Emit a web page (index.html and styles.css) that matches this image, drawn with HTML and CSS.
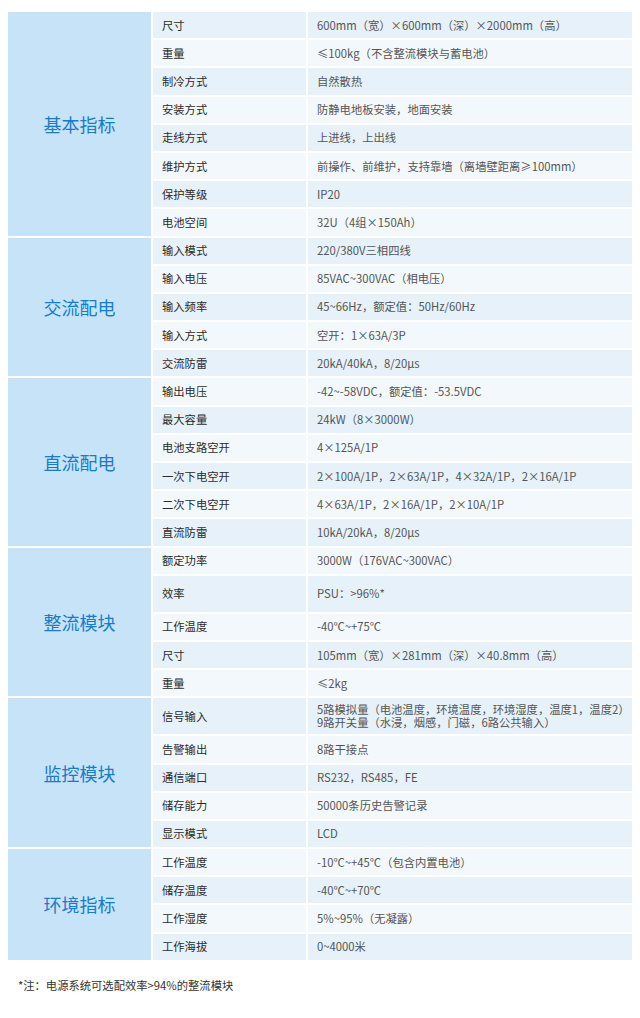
FILE: index.html
```html
<!DOCTYPE html>
<html lang="zh-CN">
<head>
<meta charset="utf-8">
<title>技术参数</title>
<link rel="stylesheet" href="styles.css">
</head>
<body>
<table class="spec">
  <colgroup>
    <col class="c-cat">
    <col class="c-lbl">
    <col class="c-val">
  </colgroup>
  <tbody>
    <tr><td class="cat" rowspan="8">基本指标</td><td class="lbl">尺寸</td><td class="val">600mm（宽）×600mm（深）×2000mm（高）</td></tr>
    <tr><td class="lbl">重量</td><td class="val">≤100kg（不含整流模块与蓄电池）</td></tr>
    <tr><td class="lbl">制冷方式</td><td class="val">自然散热</td></tr>
    <tr><td class="lbl">安装方式</td><td class="val">防静电地板安装，地面安装</td></tr>
    <tr><td class="lbl">走线方式</td><td class="val">上进线，上出线</td></tr>
    <tr><td class="lbl">维护方式</td><td class="val">前操作、前维护，支持靠墙（离墙壁距离≥100mm）</td></tr>
    <tr><td class="lbl">保护等级</td><td class="val">IP20</td></tr>
    <tr><td class="lbl">电池空间</td><td class="val">32U（4组×150Ah）</td></tr>

    <tr><td class="cat" rowspan="5">交流配电</td><td class="lbl">输入模式</td><td class="val">220/380V三相四线</td></tr>
    <tr><td class="lbl">输入电压</td><td class="val">85VAC~300VAC（相电压）</td></tr>
    <tr><td class="lbl">输入频率</td><td class="val">45~66Hz，额定值：50Hz/60Hz</td></tr>
    <tr><td class="lbl">输入方式</td><td class="val">空开：1×63A/3P</td></tr>
    <tr><td class="lbl">交流防雷</td><td class="val">20kA/40kA，8/20μs</td></tr>

    <tr><td class="cat" rowspan="6">直流配电</td><td class="lbl">输出电压</td><td class="val">-42~-58VDC，额定值：-53.5VDC</td></tr>
    <tr><td class="lbl">最大容量</td><td class="val">24kW（8×3000W）</td></tr>
    <tr><td class="lbl">电池支路空开</td><td class="val">4×125A/1P</td></tr>
    <tr><td class="lbl">一次下电空开</td><td class="val">2×100A/1P，2×63A/1P，4×32A/1P，2×16A/1P</td></tr>
    <tr><td class="lbl">二次下电空开</td><td class="val">4×63A/1P，2×16A/1P，2×10A/1P</td></tr>
    <tr><td class="lbl">直流防雷</td><td class="val">10kA/20kA，8/20μs</td></tr>

    <tr><td class="cat" rowspan="5">整流模块</td><td class="lbl">额定功率</td><td class="val">3000W（176VAC~300VAC）</td></tr>
    <tr class="tall"><td class="lbl">效率</td><td class="val">PSU：&gt;96%*</td></tr>
    <tr><td class="lbl">工作温度</td><td class="val">-40℃~+75℃</td></tr>
    <tr><td class="lbl">尺寸</td><td class="val">105mm（宽）×281mm（深）×40.8mm（高）</td></tr>
    <tr><td class="lbl">重量</td><td class="val">≤2kg</td></tr>

    <tr class="tall"><td class="cat" rowspan="5">监控模块</td><td class="lbl">信号输入</td><td class="val"><span class="line">5路模拟量（电池温度，环境温度，环境湿度，温度1，温度2）</span><span class="line">9路开关量（水浸，烟感，门磁，6路公共输入）</span></td></tr>
    <tr><td class="lbl">告警输出</td><td class="val">8路干接点</td></tr>
    <tr><td class="lbl">通信端口</td><td class="val">RS232，RS485，FE</td></tr>
    <tr><td class="lbl">储存能力</td><td class="val">50000条历史告警记录</td></tr>
    <tr><td class="lbl">显示模式</td><td class="val">LCD</td></tr>

    <tr><td class="cat" rowspan="4">环境指标</td><td class="lbl">工作温度</td><td class="val">-10℃~+45℃（包含内置电池）</td></tr>
    <tr><td class="lbl">储存温度</td><td class="val">-40℃~+70℃</td></tr>
    <tr><td class="lbl">工作湿度</td><td class="val">5%~95%（无凝露）</td></tr>
    <tr><td class="lbl">工作海拔</td><td class="val">0~4000米</td></tr>
  </tbody>
</table>
<p class="note">*注：电源系统可选配效率&gt;94%的整流模块</p>
</body>
</html>
```
FILE: styles.css
```css
html {
  overflow-x: hidden;
}
body {
  margin: 8px;
  background: #ffffff;
  font-family: "Noto Sans CJK SC", "Microsoft YaHei", sans-serif;
  color: #333333;
}
.spec {
  border-collapse: separate;
  border-spacing: 2px;
  margin: 2px 0 0 -2px;
  width: 638px;
  table-layout: fixed;
}
.c-cat { width: 143px; }
.c-lbl { width: 153px; }
.spec td {
  height: 26.2px;
  padding: 0 9px;
  vertical-align: middle;
  font-size: 11.3px;
  line-height: 13px;
  white-space: nowrap;
  overflow: hidden;
}
.spec tr.tall td {
  height: 36px;
}
.spec td .line {
  display: block;
  height: 13px;
  line-height: 13px;
}
.spec td.cat {
  background: #c6e3f7;
  color: #1a7cc3;
  font-size: 18px;
  line-height: 22px;
  text-align: center;
  padding: 0;
}
.spec td.lbl {
  color: #2b2b2b;
}
.spec td.val {
  color: #555555;
}
.spec tr:nth-child(odd) td.lbl,
.spec tr:nth-child(odd) td.val {
  background: #e6f1fa;
}
.spec tr:nth-child(even) td.lbl,
.spec tr:nth-child(even) td.val {
  background: #f3f8fd;
}
.note {
  margin: 15px 0 0 10px;
  font-size: 11.3px;
  line-height: 16px;
  color: #333333;
}
```
